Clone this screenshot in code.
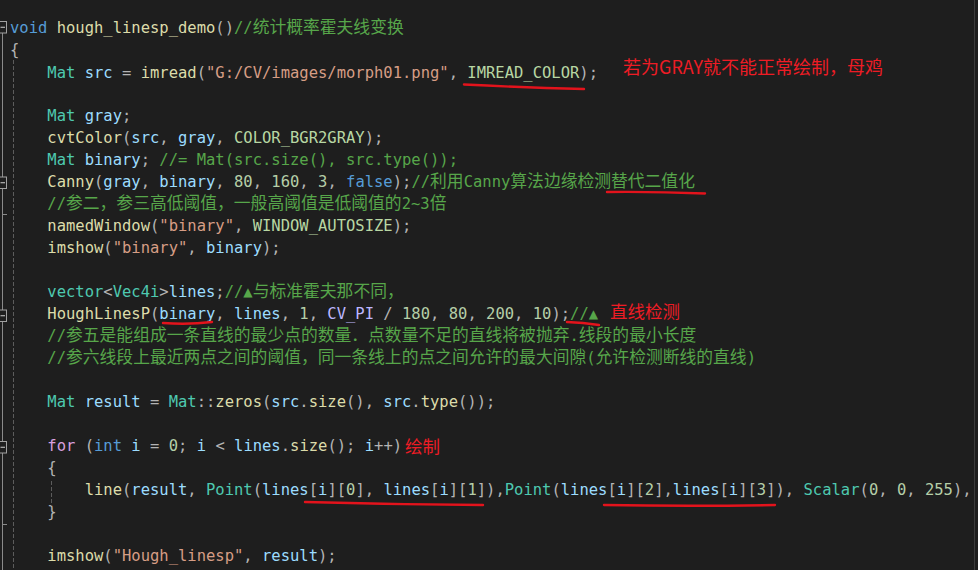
type Tok = [string, keyof typeof color];

const color = {
  k: "text-[#569cd6]",
  c: "text-[#d8a0df]",
  f: "text-[#dcdcaa]",
  t: "text-[#4ec9b0]",
  v: "text-[#9cdcfe]",
  s: "text-[#d69d85]",
  m: "text-[#57a64a]",
  e: "text-[#b8d7a3]",
  n: "text-[#b5cea8]",
  p: "text-[#b4b4b4]",
  d: "text-[#bdb7ff]",
};

const I = "    ";

const lines: { toks: Tok[]; note?: string; noteCls?: string }[] = [
  { toks: [["void", "k"], [" ", "p"], ["hough_linesp_demo", "f"], ["()", "p"], ["//统计概率霍夫线变换", "m"]] },
  { toks: [["{", "p"]] },
  {
    toks: [[I, "p"], ["Mat", "t"], [" ", "p"], ["src", "v"], [" = ", "p"], ["imread", "f"], ["(", "p"], ['"G:/CV/images/morph01.png"', "s"], [", ", "p"], ["IMREAD_COLOR", "e"], [");", "p"]],
    note: "若为GRAY就不能正常绘制，母鸡",
    noteCls: "ml-[25px] align-[4px] text-[18px]",
  },
  { toks: [] },
  { toks: [[I, "p"], ["Mat", "t"], [" ", "p"], ["gray", "v"], [";", "p"]] },
  { toks: [[I, "p"], ["cvtColor", "f"], ["(", "p"], ["src", "v"], [", ", "p"], ["gray", "v"], [", ", "p"], ["COLOR_BGR2GRAY", "e"], [");", "p"]] },
  { toks: [[I, "p"], ["Mat", "t"], [" ", "p"], ["binary", "v"], ["; ", "p"], ["//= Mat(src.size(), src.type());", "m"]] },
  {
    toks: [[I, "p"], ["Canny", "f"], ["(", "p"], ["gray", "v"], [", ", "p"], ["binary", "v"], [", ", "p"], ["80", "n"], [", ", "p"], ["160", "n"], [", ", "p"], ["3", "n"], [", ", "p"], ["false", "k"], [");", "p"], ["//利用Canny算法边缘检测替代二值化", "m"]],
  },
  { toks: [[I, "p"], ["//参二，参三高低阈值，一般高阈值是低阈值的2~3倍", "m"]] },
  { toks: [[I, "p"], ["namedWindow", "f"], ["(", "p"], ['"binary"', "s"], [", ", "p"], ["WINDOW_AUTOSIZE", "e"], [");", "p"]] },
  { toks: [[I, "p"], ["imshow", "f"], ["(", "p"], ['"binary"', "s"], [", ", "p"], ["binary", "v"], [");", "p"]] },
  { toks: [] },
  { toks: [[I, "p"], ["vector", "t"], ["<", "p"], ["Vec4i", "t"], [">", "p"], ["lines", "v"], [";", "p"], ["//▲与标准霍夫那不同，", "m"]] },
  {
    toks: [[I, "p"], ["HoughLinesP", "f"], ["(", "p"], ["binary", "v"], [", ", "p"], ["lines", "v"], [", ", "p"], ["1", "n"], [", ", "p"], ["CV_PI", "d"], [" / ", "p"], ["180", "n"], [", ", "p"], ["80", "n"], [", ", "p"], ["200", "n"], [", ", "p"], ["10", "n"], [");", "p"], ["//▲", "m"]],
    note: "直线检测",
    noteCls: "ml-[12px] align-[1px] text-[17.5px]",
  },
  { toks: [[I, "p"], ["//参五是能组成一条直线的最少点的数量．点数量不足的直线将被抛弃.线段的最小长度", "m"]] },
  { toks: [[I, "p"], ["//参六线段上最近两点之间的阈值，同一条线上的点之间允许的最大间隙(允许检测断线的直线)", "m"]] },
  { toks: [] },
  {
    toks: [[I, "p"], ["Mat", "t"], [" ", "p"], ["result", "v"], [" = ", "p"], ["Mat", "t"], ["::", "p"], ["zeros", "f"], ["(", "p"], ["src", "v"], [".", "p"], ["size", "f"], ["(), ", "p"], ["src", "v"], [".", "p"], ["type", "f"], ["());", "p"]],
  },
  { toks: [] },
  {
    toks: [[I, "p"], ["for", "c"], [" (", "p"], ["int", "k"], [" ", "p"], ["i", "v"], [" = ", "p"], ["0", "n"], ["; ", "p"], ["i", "v"], [" < ", "p"], ["lines", "v"], [".", "p"], ["size", "f"], ["(); ", "p"], ["i", "v"], ["++)", "p"]],
    note: "绘制",
    noteCls: "ml-[3px] align-[-2px] text-[17.5px]",
  },
  { toks: [[I, "p"], ["{", "p"]] },
  {
    toks: [
      [I + I, "p"], ["line", "f"], ["(", "p"], ["result", "v"], [", ", "p"], ["Point", "t"], ["(", "p"],
      ["lines", "v"], ["[", "p"], ["i", "v"], ["][", "p"], ["0", "n"], ["], ", "p"],
      ["lines", "v"], ["[", "p"], ["i", "v"], ["][", "p"], ["1", "n"], ["]),", "p"],
      ["Point", "t"], ["(", "p"],
      ["lines", "v"], ["[", "p"], ["i", "v"], ["][", "p"], ["2", "n"], ["],", "p"],
      ["lines", "v"], ["[", "p"], ["i", "v"], ["][", "p"], ["3", "n"], ["]), ", "p"],
      ["Scalar", "t"], ["(", "p"], ["0", "n"], [", ", "p"], ["0", "n"], [", ", "p"], ["255", "n"], ["),", "p"],
    ],
  },
  { toks: [[I, "p"], ["}", "p"]] },
  { toks: [] },
  { toks: [[I, "p"], ["imshow", "f"], ["(", "p"], ['"Hough_linesp"', "s"], [", ", "p"], ["result", "v"], [");", "p"]] },
];

function withCjk(text: string) {
  return text.split(/([\u3000-\u303f\u4e00-\u9fff\uff00-\uffef]+)/).map((part, i) =>
    i % 2 ? (
      <span key={i} className="font-['Noto_Sans_CJK_SC',sans-serif] text-[16.8px] leading-[10px]">
        {part}
      </span>
    ) : (
      part
    )
  );
}

function Gutter() {
  const box = (y: number) => (
    <g key={y}>
      <rect x="-1.5" y={y} width="8" height="11.5" fill="#1e1e1e" stroke="#a0a0a0" strokeWidth="1" />
      <line x1="0.5" y1={y + 5.75} x2="5" y2={y + 5.75} stroke="#d0d0d0" strokeWidth="1" />
    </g>
  );
  return (
    <svg className="absolute left-0 top-0" width="60" height="570">
      <line x1="2.5" y1="33" x2="2.5" y2="570" stroke="#8a8a8a" strokeWidth="1" />
      <line x1="2.5" y1="214.5" x2="7" y2="214.5" stroke="#8a8a8a" strokeWidth="1" />
      <line x1="2.5" y1="524.5" x2="7" y2="524.5" stroke="#8a8a8a" strokeWidth="1" />
      <line x1="13.5" y1="60" x2="13.5" y2="570" stroke="#5c5c5c" strokeWidth="1" strokeDasharray="4 2" />
      <line x1="51.5" y1="481" x2="51.5" y2="506" stroke="#5c5c5c" strokeWidth="1" strokeDasharray="4 2" />
      {box(21.5)}
      {box(177)}
      {box(310)}
      {box(441.5)}
    </svg>
  );
}

function Marks() {
  const d = [
    "M464 84.5 Q524 87.5 584 89",
    "M607 192 Q656 191.5 705 193.5",
    "M163 323 Q188 325 212 322",
    "M567 322 Q583 322.5 599 325",
    "M305 502 Q394 504.5 483 505",
    "M604 505 Q690 506.5 775 505",
  ];
  return (
    <svg className="pointer-events-none absolute left-0 top-0" width="978" height="570">
      {d.map((p) => (
        <path key={p} d={p} fill="none" stroke="#e3131c" strokeWidth="2.4" strokeLinecap="round" />
      ))}
      <line x1="974.5" y1="0" x2="974.5" y2="570" stroke="#3c3c3c" strokeWidth="1" />
    </svg>
  );
}

export default function App() {
  return (
    <main className="relative h-[570px] w-[978px] overflow-hidden bg-[#1e1e1e]">
      <Gutter />
      <div className="pl-[10px] pt-[17px] font-['DejaVu_Sans_Mono',monospace] text-[15.5px]">
        {lines.map((ln, i) => (
          <div key={i} className="h-[22px] whitespace-pre leading-[22px]">
            {ln.toks.map(([text, c], j) => (
              <span key={j} className={color[c]}>
                {withCjk(text)}
              </span>
            ))}
            {ln.note && (
              <span className={`font-['Noto_Sans_CJK_SC',sans-serif] leading-[10px] text-[#ee1c25] ${ln.noteCls}`}>
                {ln.note}
              </span>
            )}
          </div>
        ))}
      </div>
      <Marks />
    </main>
  );
}
